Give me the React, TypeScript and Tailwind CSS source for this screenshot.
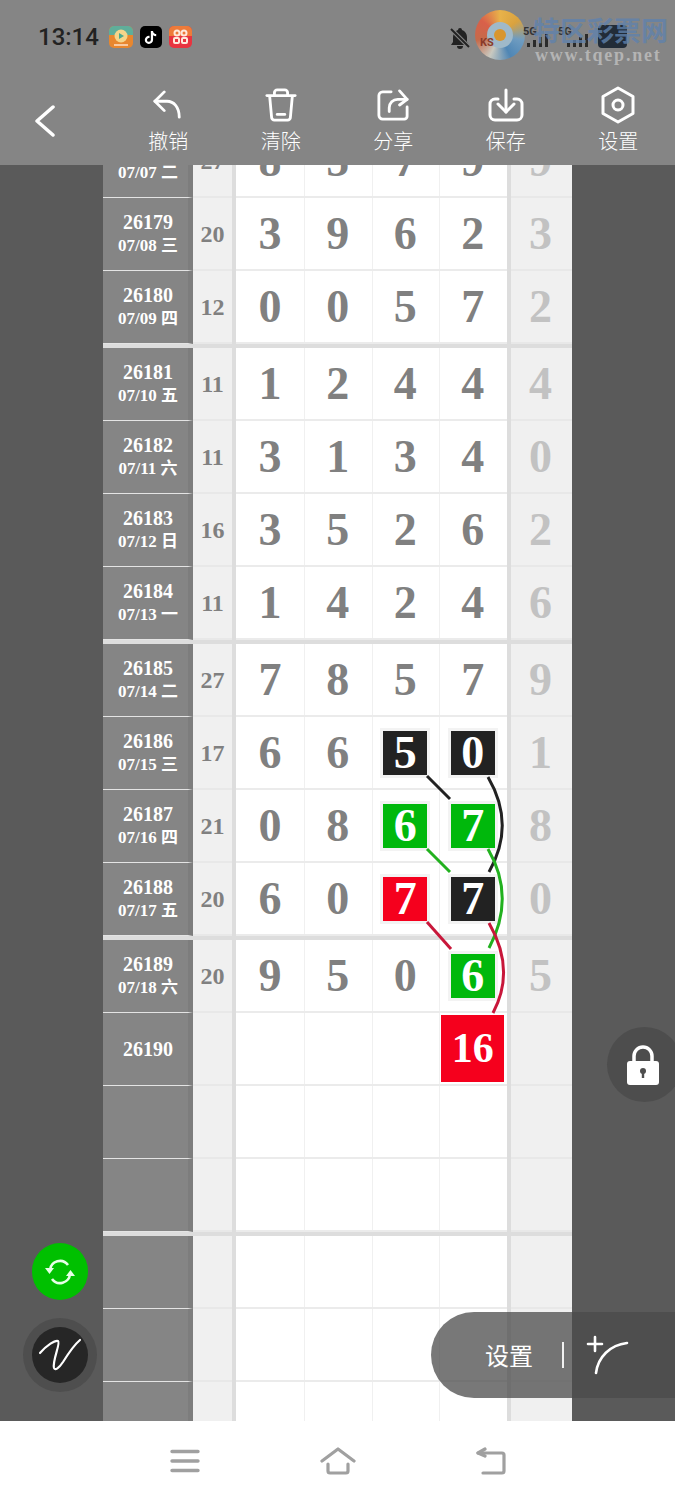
import { FaTiktok } from 'react-icons/fa'

type Row = {
  id?: string
  date?: string
  sum?: string
  nums?: string[]
  last?: string
  marks?: Record<number, 'black' | 'green' | 'red'>
  big?: string
  sep?: boolean
}

const rows: Row[] = [
  { id: '26178', date: '07/07 二', sum: '27', nums: ['8', '5', '7', '9'], last: '9' },
  { id: '26179', date: '07/08 三', sum: '20', nums: ['3', '9', '6', '2'], last: '3' },
  { id: '26180', date: '07/09 四', sum: '12', nums: ['0', '0', '5', '7'], last: '2', sep: true },
  { id: '26181', date: '07/10 五', sum: '11', nums: ['1', '2', '4', '4'], last: '4' },
  { id: '26182', date: '07/11 六', sum: '11', nums: ['3', '1', '3', '4'], last: '0' },
  { id: '26183', date: '07/12 日', sum: '16', nums: ['3', '5', '2', '6'], last: '2' },
  { id: '26184', date: '07/13 一', sum: '11', nums: ['1', '4', '2', '4'], last: '6', sep: true },
  { id: '26185', date: '07/14 二', sum: '27', nums: ['7', '8', '5', '7'], last: '9' },
  { id: '26186', date: '07/15 三', sum: '17', nums: ['6', '6', '5', '0'], last: '1', marks: { 2: 'black', 3: 'black' } },
  { id: '26187', date: '07/16 四', sum: '21', nums: ['0', '8', '6', '7'], last: '8', marks: { 2: 'green', 3: 'green' } },
  { id: '26188', date: '07/17 五', sum: '20', nums: ['6', '0', '7', '7'], last: '0', marks: { 2: 'red', 3: 'black' }, sep: true },
  { id: '26189', date: '07/18 六', sum: '20', nums: ['9', '5', '0', '6'], last: '5', marks: { 3: 'green' } },
  { id: '26190', big: '16' },
  {},
  { sep: true },
  {},
  {},
  {},
]

const markBg = {
  black: 'bg-[#222222]',
  green: 'bg-[#00b80c]',
  red: 'bg-[#f5001d]',
}

const NumCell = ({ value, mark, big, wide }: { value?: string; mark?: 'black' | 'green' | 'red'; big?: string; wide?: boolean }) => (
  <div className={`flex items-center justify-center border-l border-[#f0f0f0] first:border-l-0 ${wide ? 'w-[68px]' : 'w-[67.5px] pr-px'}`}>
    {big ? (
      <div className="flex h-[67px] w-[63px] items-center justify-center bg-[#f5001d] text-[42px] font-bold text-white">{big}</div>
    ) : mark ? (
      <div className={`flex h-[44px] w-[44px] items-center justify-center text-[46px] font-bold text-white shadow-[0_0_0_3px_#f3f3f3] ${markBg[mark]}`}>{value}</div>
    ) : (
      <span className="text-[46px] font-bold text-[#808080]">{value}</span>
    )}
  </div>
)

const TableRow = ({ row }: { row: Row }) => (
  <>
    <div className="flex h-[73px] w-[469px] shrink-0">
      <div className="flex w-[90px] flex-col items-center justify-center border-r-[5px] border-b border-r-[#7d7d7d] border-b-[#e4e4e4] bg-[#858585] pl-[5px] font-bold text-white">
        <div className="text-[20px] leading-[24px]">{row.id}</div>
        {row.date && <div className="whitespace-nowrap text-[17px] leading-[24px]">{row.date}</div>}
      </div>
      <div className="flex w-[39px] items-center justify-center border-b-2 border-[#e8e8e8] bg-[#f0f0f0] text-[24px] font-bold text-[#808080]">{row.sum}</div>
      <div className="w-[4px] bg-[#dddddd]" />
      <div className="flex w-[271px] border-b-2 border-[#ebebeb] bg-white">
        {[0, 1, 2, 3].map(i => (
          <NumCell key={i} value={row.nums?.[i]} mark={row.marks?.[i]} big={i === 3 ? row.big : undefined} wide={i === 0} />
        ))}
      </div>
      <div className="w-[4px] bg-[#dddddd]" />
      <div className="flex w-[61px] items-center justify-center border-b-2 border-[#e8e8e8] bg-[#f0f0f0] pr-[2px] text-[46px] font-bold text-[#c2c2c2]">{row.last}</div>
    </div>
    {row.sep && <div className="h-[4px] w-[469px] shrink-0 bg-[#dddddd]" />}
  </>
)

const ToolBtn = ({ label, children }: { label: string; children: React.ReactNode }) => (
  <div className="flex w-[112.5px] flex-col items-center">
    <div className="flex h-[40px] items-center justify-center">{children}</div>
    <div className="mt-[2px] font-['Noto_Sans_CJK_SC',sans-serif] text-[20px] font-light leading-[28px] text-white">{label}</div>
  </div>
)

export default function App() {
  return (
    <div className="relative h-[1500px] w-[675px] overflow-hidden bg-white font-['Liberation_Serif','Noto_Sans_CJK_SC',serif]">
      {/* top bar */}
      <div className="h-[165px] bg-[#858585]">
        <div className="flex h-[85px] items-start pl-[38px] pt-[22px]">
          <div className="font-['Roboto',sans-serif] text-[24px] font-medium leading-[30px] text-[#222222]">13:14</div>
          <div className="ml-[10px] mt-[4px] flex gap-[7px]">
            <svg width="24" height="22" viewBox="0 0 24 22">
              <rect width="24" height="22" rx="5" fill="#e8872f" />
              <path d="M0 5a5 5 0 0 1 5-5h14a5 5 0 0 1 5 5v4H0z" fill="#5fae9a" />
              <circle cx="12" cy="10" r="6.500" fill="#f6d58a" />
              <path d="M10 7l5 3-5 3z" fill="#4aa88f" />
              <rect x="5" y="18" width="14" height="2" fill="#f9c9a0" />
            </svg>
            <div className="flex h-[22px] w-[22px] items-center justify-center rounded-[5px] bg-black text-[13px] text-white"><FaTiktok /></div>
            <svg width="23" height="22" viewBox="0 0 23 22">
              <rect width="23" height="22" rx="5" fill="#e8333f" />
              <path d="M0 5a5 5 0 0 1 5-5h13a5 5 0 0 1 5 5v5H0z" fill="#ee7b3a" />
              <g fill="none" stroke="#ffe9dc" strokeWidth="2">
                <circle cx="8" cy="7" r="2.500" />
                <circle cx="15" cy="7" r="2.500" />
                <rect x="5" y="12" width="5" height="5" rx="1" />
                <rect x="13" y="12" width="5" height="5" rx="1" />
              </g>
            </svg>
          </div>
        </div>
        <div className="flex h-[80px] items-start">
          <div className="ml-[35px] mt-[20px] w-[77px]">
            <svg width="20" height="32" viewBox="0 0 20 32" fill="none" stroke="white" strokeWidth="3.500" strokeLinecap="round" strokeLinejoin="round">
              <path d="M18 2 2 16l16 14" />
            </svg>
          </div>
          <ToolBtn label="撤销">
            <svg width="30" height="32" viewBox="0 0 32 34" fill="none" stroke="white" strokeWidth="3" strokeLinecap="round" strokeLinejoin="round">
              <path d="M12 3 2 13l10 10" />
              <path d="M2 13h13c7 0 13 6 13 17" />
            </svg>
          </ToolBtn>
          <ToolBtn label="清除">
            <svg width="32" height="34" viewBox="0 0 34 36" fill="none" stroke="white" strokeWidth="3" strokeLinecap="round" strokeLinejoin="round">
              <path d="M2 8h30" />
              <path d="M10 7V5a3 3 0 0 1 3-3h8a3 3 0 0 1 3 3v2" />
              <path d="M5 9l2 22a3 3 0 0 0 3 3h14a3 3 0 0 0 3-3l2-22" />
              <path d="M13 28h8" />
            </svg>
          </ToolBtn>
          <ToolBtn label="分享">
            <svg width="32" height="32" viewBox="0 0 34 34" fill="none" stroke="white" strokeWidth="3" strokeLinecap="round" strokeLinejoin="round">
              <path d="M15 3H6a4 4 0 0 0-4 4v21a4 4 0 0 0 4 4h23a3 3 0 0 0 3-3V19" />
              <path d="M13 24v-4c0-5 4-9 9-9h10" />
              <path d="M24 2l8 9-8 6" />
            </svg>
          </ToolBtn>
          <ToolBtn label="保存">
            <svg width="36" height="34" viewBox="0 0 36 34" fill="none" stroke="white" strokeWidth="3" strokeLinecap="round" strokeLinejoin="round">
              <path d="M10 11H7a5 5 0 0 0-5 5v11a5 5 0 0 0 5 5h22a5 5 0 0 0 5-5V16a5 5 0 0 0-5-5h-3" />
              <path d="M18 2v22" />
              <path d="M10 16l8 8 8-8" />
            </svg>
          </ToolBtn>
          <ToolBtn label="设置">
            <svg width="34" height="38" viewBox="0 0 34 38" fill="none" stroke="white" strokeWidth="3" strokeLinejoin="round">
              <path d="M17 2l15 8.500v17L17 36 2 27.500v-17z" />
              <circle cx="17" cy="19" r="5" />
            </svg>
          </ToolBtn>
        </div>
      </div>

      {/* status icons and watermark */}
      <div className="absolute left-[449px] top-[10px] h-[55px] w-[226px]">
        <svg className="absolute left-0 top-[17px]" width="22" height="22" viewBox="0 0 22 22">
          <path d="M11 1a2 2 0 0 1 2 2c3 1 5 4 5 7v5l2 3H2l2-3v-5c0-3 2-6 5-7a2 2 0 0 1 2-2z" fill="#222" />
          <path d="M8 19a3 3 0 0 0 6 0z" fill="#222" />
          <path d="M2 2l18 18" stroke="#858585" strokeWidth="4" />
          <path d="M2 2l18 18" stroke="#222" strokeWidth="2" />
        </svg>
        <div className="absolute left-[26px] top-0 flex h-[50px] w-[50px] items-center justify-center rounded-full bg-[conic-gradient(#e8b24a,#d9a23f,#6f9cc0,#4f86b5,#c9c9c0,#c66a4a,#d9604a,#e8b24a)]">
          <div className="flex h-[26px] w-[26px] items-center justify-center rounded-full bg-[#9fb9c9]">
            <div className="h-[12px] w-[12px] rounded-full bg-[#d9962e]" />
          </div>
        </div>
        <svg className="absolute left-[60px] top-[12px]" width="120" height="28" viewBox="0 0 120 28" fill="#2b2b2b">
          <rect x="18" y="21" width="3" height="4" />
          <rect x="24" y="18" width="3" height="7" />
          <rect x="30" y="15" width="3" height="10" />
          <rect x="36" y="12" width="3" height="13" />
          <rect x="58" y="21" width="3" height="4" />
          <rect x="64" y="18" width="3" height="7" />
          <rect x="70" y="15" width="3" height="10" />
          <rect x="76" y="12" width="3" height="13" />
          <rect x="89" y="3" width="29" height="23" rx="4" fill="#222c38" />
        </svg>
        <div className="absolute left-[31px] top-[26px] font-['Roboto',sans-serif] text-[11px] font-bold leading-[13px] text-[#8a3a2a]">KS</div>
        <div className="absolute left-[74px] top-[14px] font-['Roboto',sans-serif] text-[11px] font-bold text-[#333]">5G</div>
        <div className="absolute left-[109px] top-[14px] font-['Roboto',sans-serif] text-[11px] font-bold text-[#333]">5G</div>
        <div className="absolute left-[84px] top-[4px] whitespace-nowrap font-['Noto_Sans_CJK_SC',sans-serif] text-[27px] font-bold leading-[32px] text-[#5f82ad]/80">特区彩票网</div>
        <div className="absolute left-[86px] top-[35px] whitespace-nowrap text-[18px] font-bold leading-[20px] tracking-[1.800px] text-[#b4b4b4]">www.tqep.net</div>
      </div>

      {/* chart */}
      <div className="flex h-[1256px] justify-center overflow-hidden bg-[#5a5a5a]">
        <div className="-mt-[40px] flex flex-col">
          {rows.map((row, i) => (
            <TableRow key={i} row={row} />
          ))}
        </div>
      </div>

      {/* connecting lines */}
      <svg className="absolute left-0 top-0" width="675" height="1100" viewBox="0 0 675 1100" fill="none" strokeWidth="3">
        <g stroke="#222222">
          <path d="M427 776l23 23" />
          <path d="M488 777Q516 825 489 872" />
        </g>
        <g stroke="#22b11f">
          <path d="M427 849l23 23" />
          <path d="M488 849Q516 897 489 948" />
        </g>
        <g stroke="#c8173a">
          <path d="M427 922l24 27" />
          <path d="M489 923Q516 970 493 1013" />
        </g>
      </svg>

      {/* floating buttons */}
      <div className="absolute left-[607px] top-[1027px] flex h-[75px] w-[75px] items-center justify-center rounded-full bg-[#4d4d4d] pr-[3px]">
        <svg width="34" height="40" viewBox="0 0 34 40">
          <path d="M8 18V11a9 9 0 0 1 18 0v7" fill="none" stroke="white" strokeWidth="3.500" />
          <rect x="1" y="16" width="32" height="24" rx="3" fill="white" />
          <circle cx="17" cy="26" r="3" fill="#4d4d4d" />
          <rect x="15.800" y="27" width="2.400" height="6" fill="#4d4d4d" />
        </svg>
      </div>
      <div className="absolute left-[32px] top-[1243px] flex h-[57px] w-[56px] items-center justify-center rounded-full bg-[#00c000]">
        <svg width="32" height="28" viewBox="0 0 32 28" fill="none" stroke="#e6ffe6" strokeWidth="2.600">
          <path d="M6 12a10 10 0 0 1 18-5" />
          <path d="M26 16a10 10 0 0 1-18 5" />
          <path d="M1 10h9l-4.500 6z" fill="#e6ffe6" stroke="none" />
          <path d="M31 18h-9l4.500-6z" fill="#e6ffe6" stroke="none" />
        </svg>
      </div>
      <div className="absolute left-[23px] top-[1318px] flex h-[74px] w-[74px] items-center justify-center rounded-full bg-[#4e4e4e]">
        <div className="flex h-[56px] w-[56px] items-center justify-center rounded-full bg-[#262626]">
          <svg width="44" height="36" viewBox="0 0 44 36" fill="none" stroke="white" strokeWidth="2.200" strokeLinecap="round">
            <path d="M2 16C9 8 17 3 20 4c3 2-6 20-4 27 1 3 5 0 9-6C30 17 36 8 42 3" />
          </svg>
        </div>
      </div>
      <div className="absolute left-[431px] top-[1312px] flex h-[86px] w-[244px] items-center rounded-l-[43px] bg-[#4a4a4abe] font-['Noto_Sans_CJK_SC',sans-serif]">
        <div className="ml-[54px] text-[24px] leading-[32px] text-white">设置</div>
        <div className="ml-[29px] h-[26px] w-[2px] bg-white/90" />
        <svg className="ml-[22px]" width="44" height="44" viewBox="0 0 44 44" fill="none" stroke="white" strokeWidth="2.600" strokeLinecap="round">
          <path d="M2 11h14M9 4v14" />
          <path d="M10 40C12 24 24 12 41 10" />
        </svg>
      </div>

      {/* bottom nav */}
      <div className="flex h-[79px] items-center justify-center gap-[120px] bg-white pt-[1px]">
        <svg width="30" height="24" viewBox="0 0 30 24" stroke="#a0a0a0" strokeWidth="3.400" strokeLinecap="round">
          <path d="M2 2.500h26M2 12h26M2 21.500h26" />
        </svg>
        <svg width="36" height="28" viewBox="0 0 36 28" fill="none" stroke="#a0a0a0" strokeWidth="3.200" strokeLinecap="round" strokeLinejoin="round">
          <path d="M2 14 18 2l16 12" />
          <path d="M8 17v7a2 2 0 0 0 2 2h16a2 2 0 0 0 2-2v-7" />
        </svg>
        <svg width="30" height="28" viewBox="0 0 30 28" fill="none" stroke="#a0a0a0" strokeWidth="3.200" strokeLinecap="round" strokeLinejoin="round">
          <path d="M2 6h24a2 2 0 0 1 2 2v16a2 2 0 0 1-2 2H7" />
          <path d="M9 2 2 6l7 3" />
        </svg>
      </div>
    </div>
  )
}
